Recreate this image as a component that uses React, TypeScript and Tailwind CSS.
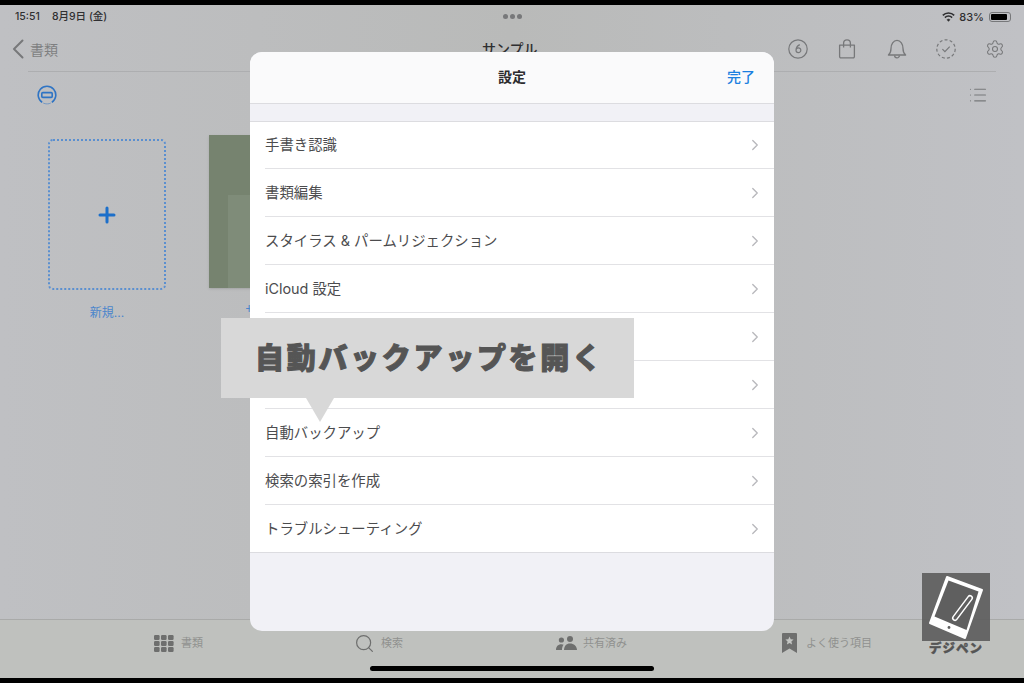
import { ChevronRight, List, Plus, Search, Settings } from 'lucide-react';
import type { ReactNode } from 'react';

const rows = [
  '手書き認識',
  '書類編集',
  'スタイラス & パームリジェクション',
  'iCloud 設定',
  '',
  '',
  '自動バックアップ',
  '検索の索引を作成',
  'トラブルシューティング',
];

function BackChevron() {
  return (
    <svg width="12" height="20" viewBox="0 0 12 20" fill="none" stroke="#77787a" strokeWidth="2" strokeLinecap="round" strokeLinejoin="round">
      <path d="M10.5 1.5L2 10l8.5 8.5" />
    </svg>
  );
}

function CircleSix() {
  return (
    <svg width="20" height="20" viewBox="0 0 20 20" fill="none" stroke="#77787a" strokeWidth="1.2">
      <circle cx="10" cy="10" r="9.2" />
      <path d="M11.8 5.6C9.6 6.6 8 8.6 8 11.2a2.4 2.4 0 1 0 4.8 0 2.4 2.4 0 0 0-4.8 0" />
    </svg>
  );
}

function BagIcon() {
  return (
    <svg width="20" height="20" viewBox="0 0 20 20" fill="none" stroke="#77787a" strokeWidth="1.3" strokeLinejoin="round">
      <path d="M2.6 6.2h14.8v11.4a1.2 1.2 0 0 1-1.2 1.2H3.8a1.2 1.2 0 0 1-1.2-1.2z" />
      <path d="M6.6 8.6V4.2a3.4 3.4 0 0 1 6.8 0v4.4" />
    </svg>
  );
}

function BellIcon() {
  return (
    <svg width="20" height="20" viewBox="0 0 20 20" fill="none" stroke="#77787a" strokeWidth="1.3" strokeLinejoin="round">
      <path d="M1.4 16c1.8-1.6 2.6-3.4 2.6-6.6 0-4 2.4-8 6-8s6 4 6 8c0 3.2.8 5 2.6 6.6z" />
      <path d="M7.6 16.4a2.4 2.4 0 0 0 4.8 0" />
    </svg>
  );
}

function DashedCheck() {
  return (
    <svg width="20" height="20" viewBox="0 0 20 20" fill="none" stroke="#77787a" strokeWidth="1.2">
      <circle cx="10" cy="10" r="9.2" strokeDasharray="3 2.2" />
      <path d="M6.4 10.2l2.5 2.5 4.8-5" />
    </svg>
  );
}

function ScanIcon() {
  return (
    <svg width="20" height="20" viewBox="0 0 20 20" fill="none" stroke="#2f74c4" strokeWidth="1.6">
      <path d="M5.2 17.4A8.8 8.8 0 1 1 14.8 17.4" />
      <path d="M6.6 18.2A8.8 8.8 0 0 0 13.4 18.2" strokeDasharray="1 1" strokeWidth="1" />
      <rect x="4.8" y="7.6" width="10.4" height="4.8" rx="1" />
    </svg>
  );
}

function GridIcon() {
  return (
    <svg width="20" height="17" viewBox="0 0 20 17" fill="#6e6f6e">
      <rect x="0" y="0" width="5.6" height="5" rx="1.2" />
      <rect x="7" y="0" width="5.6" height="5" rx="1.2" />
      <rect x="14" y="0" width="5.6" height="5" rx="1.2" />
      <rect x="0" y="6" width="5.6" height="5" rx="1.2" />
      <rect x="7" y="6" width="5.6" height="5" rx="1.2" />
      <rect x="14" y="6" width="5.6" height="5" rx="1.2" />
      <rect x="0" y="12" width="5.6" height="5" rx="1.2" />
      <rect x="7" y="12" width="5.6" height="5" rx="1.2" />
      <rect x="14" y="12" width="5.6" height="5" rx="1.2" />
    </svg>
  );
}

function PeopleIcon() {
  return (
    <svg width="21" height="14" viewBox="0 0 21 14" fill="#6e6f6e">
      <circle cx="14" cy="3" r="3" />
      <path d="M8 14c0-4 2.4-6.6 6-6.6s7 2.6 7 6.6z" />
      <circle cx="5.4" cy="4" r="2.6" />
      <path d="M0 14c0-3.6 2-5.8 5.4-5.8 1 0 1.6.2 2.2.5C6.4 10 6 12 6 14z" />
    </svg>
  );
}

function BookmarkIcon() {
  return (
    <svg width="15" height="20" viewBox="0 0 15 20">
      <path d="M0 1a1 1 0 0 1 1-1h13a1 1 0 0 1 1 1v19l-7.5-4.4L0 20z" fill="#6e6f6e" />
      <path
        d="M7.5 3.6l1.2 2.7 2.9.3-2.2 1.9.7 2.9-2.6-1.5-2.6 1.5.7-2.9-2.2-1.9 2.9-.3z"
        fill="#c4c6c3"
      />
    </svg>
  );
}

function WifiIcon() {
  return (
    <svg width="13" height="10" viewBox="0 0 13 10" fill="none" stroke="#2f2f31" strokeWidth="1.6">
      <path d="M0.8 3.4a8 8 0 0 1 11.4 0" />
      <path d="M2.9 5.6a5 5 0 0 1 7.2 0" />
      <path d="M6.5 9.4L4.9 7.7a2.3 2.3 0 0 1 3.2 0z" fill="#2f2f31" strokeWidth="0.4" />
    </svg>
  );
}

function TabletLogo() {
  return (
    <svg width="68" height="68" viewBox="0 0 68 68" fill="none">
      <path d="M25 4L60 17 43 65 8 50z" fill="#fff" stroke="#fff" strokeWidth="2" strokeLinejoin="round" />
      <path d="M26.5 7.5L56.5 18.5 44.5 57 12.5 43.5z" fill="#5f5f5f" />
      <circle cx="27" cy="54.5" r="1.4" fill="#5f5f5f" />
      <path d="M48 25L33 45" stroke="#fff" strokeWidth="6" strokeLinecap="round" />
      <path d="M48 25L33 45" stroke="#5f5f5f" strokeWidth="3" strokeLinecap="round" />
    </svg>
  );
}

function TabItem({ icon, label, className }: { icon: ReactNode; label: string; className: string }) {
  return (
    <div className={`flex items-center ${className}`}>
      {icon}
      <span className="text-[11px] text-[#90918f]">{label}</span>
    </div>
  );
}

export default function App() {
  return (
    <div className="relative h-[683px] w-[1024px] overflow-hidden bg-black font-['Inter','Noto_Sans_CJK_JP',sans-serif]">
      <div className="mt-[5px] flex h-[673px] flex-col bg-gradient-to-r from-[#bfc0c3] via-[#b9bab9] to-[#c0c1c5]">
        {/* status bar */}
        <div className="flex h-[22px] shrink-0 items-center justify-between pl-[15px] pr-[13px] pt-[2px] text-[10.5px] font-medium text-[#2f2f31]">
          <div className="flex gap-[12px]">
            <span>15:51</span>
            <span>8月9日 (金)</span>
          </div>
          <div className="flex items-center gap-[4px]">
            <WifiIcon />
            <span className="text-[11px]">83%</span>
            <div className="ml-[1px] flex h-[10px] w-[22px] items-center rounded-[3px] border border-[#77787a] p-[1px]">
              <div className="h-full w-[16px] rounded-[1px] bg-black" />
            </div>
          </div>
        </div>

        {/* nav */}
        <div className="mx-[28px] flex h-[45px] shrink-0 items-center justify-between border-b border-[#adaeb0]">
          <div className="-ml-[16px] flex items-center gap-[6px] text-[14px] text-[#7e7f81]">
            <BackChevron />
            <span>書類</span>
          </div>
          <div className="-mr-[9px] flex items-center gap-[29.25px]">
            <CircleSix />
            <BagIcon />
            <BellIcon />
            <DashedCheck />
            <Settings size={20} strokeWidth={1.3} className="text-[#77787a]" />
          </div>
        </div>

        {/* document area */}
        <div className="flex h-[45px] shrink-0 items-center justify-between pl-[37px] pr-[36px]">
          <ScanIcon />
          <List size={20} strokeWidth={1.3} className="text-[#77787a]" />
        </div>
        <div className="flex min-h-0 flex-1 gap-[43px] pl-[48px] pt-[22px]">
          <div className="flex flex-col items-center">
            <div className="flex h-[151px] w-[118px] items-center justify-center rounded-[5px] border-2 border-dotted border-[#5a8fd0]">
              <Plus size={24} strokeWidth={3} className="text-[#1c6fca]" />
            </div>
            <span className="mt-[14px] text-[12px] text-[#4b86cc]">新規...</span>
          </div>
          <div className="-mt-[4px] flex flex-col items-center">
            <div className="flex h-[153px] w-[106px] items-end justify-end bg-[#76836f] shadow-sm">
              <div className="h-[93px] w-[87px] bg-[#7f8c79]" />
            </div>
            <span className="ml-[14px] mt-[14px] text-[12px] text-[#4b86cc]">サンプル</span>
          </div>
        </div>

        {/* tab bar */}
        <div className="relative flex h-[59px] shrink-0 border-t border-[#a9aaa9] bg-[#bfc1be]">
          <div className="flex h-[46px] items-center">
            <TabItem className="ml-[154px] gap-[7px]" icon={<GridIcon />} label="書類" />
            <TabItem
              className="ml-[151px] gap-[6px]"
              icon={<Search size={21} strokeWidth={1.4} className="text-[#6e6f6e]" />}
              label="検索"
            />
            <TabItem className="ml-[153px] gap-[6px]" icon={<PeopleIcon />} label="共有済み" />
            <TabItem className="ml-[155px] gap-[9px]" icon={<BookmarkIcon />} label="よく使う項目" />
          </div>
          <div className="absolute left-[370px] top-[46px] h-[5px] w-[284px] rounded-full bg-black" />
        </div>
      </div>

      {/* three dots */}
      <div className="absolute left-[503px] top-[14px] flex gap-[2px]">
        <div className="h-[5px] w-[5px] rounded-full bg-[#77787a]" />
        <div className="h-[5px] w-[5px] rounded-full bg-[#77787a]" />
        <div className="h-[5px] w-[5px] rounded-full bg-[#77787a]" />
      </div>
      <div className="absolute left-[482px] top-[39px] text-[14px] font-medium leading-[20px] text-[#2f2f31]">サンプル</div>

      {/* settings modal */}
      <div className="absolute left-[250px] top-[52px] flex h-[579px] w-[524px] flex-col overflow-hidden rounded-[12px] bg-[#f1f1f6]">
        <div className="relative flex h-[52px] shrink-0 items-center justify-center border-b border-[#dcdce0] bg-[#fafafb] pb-[2px]">
          <span className="text-[14px] font-bold text-[#2c2c2e]">設定</span>
          <span className="absolute right-[19px] text-[14px] font-medium text-[#1b7fe0]">完了</span>
        </div>
        <div className="mt-[17px] border-y border-[#dcdce0] bg-white">
          {rows.map((label, i) => (
            <div key={i} className="pl-[15px]">
              <div
                className={`flex items-center justify-between pr-[10px] ${
                  i === 0 || i === rows.length - 1 ? 'h-[47px]' : 'h-[48px]'
                } ${i < rows.length - 1 ? 'border-b border-[#e2e2e5]' : ''}`}
              >
                <span className="text-[14.4px] text-[#4c4c4e]">{label}</span>
                <ChevronRight size={18} strokeWidth={1.8} className="text-[#b9b9bd]" />
              </div>
            </div>
          ))}
        </div>
      </div>

      {/* callout */}
      <div className="absolute left-[221px] top-[318px] flex h-[80px] w-[413px] items-center bg-[#d8d8d8] pl-[34px] pt-[2px]">
        <span className="text-[29px] font-black tracking-[2.7px] text-[#555555] [-webkit-text-stroke:1px_#555555]">自動バックアップを開く</span>
      </div>
      <div className="absolute left-[306px] top-[398px] h-0 w-0 border-x-[14px] border-t-[24px] border-x-transparent border-t-[#d8d8d8]" />

      {/* watermark */}
      <div className="absolute left-[922px] top-[573px] flex w-[68px] flex-col items-center">
        <div className="flex h-[68px] w-[68px] items-center justify-center bg-[#5c5c5c]/90">
          <TabletLogo />
        </div>
        <span className="text-[12.5px] font-black leading-[15px] tracking-[1px] text-[#555555] [-webkit-text-stroke:0.4px_#555555]">デジペン</span>
      </div>
    </div>
  );
}
